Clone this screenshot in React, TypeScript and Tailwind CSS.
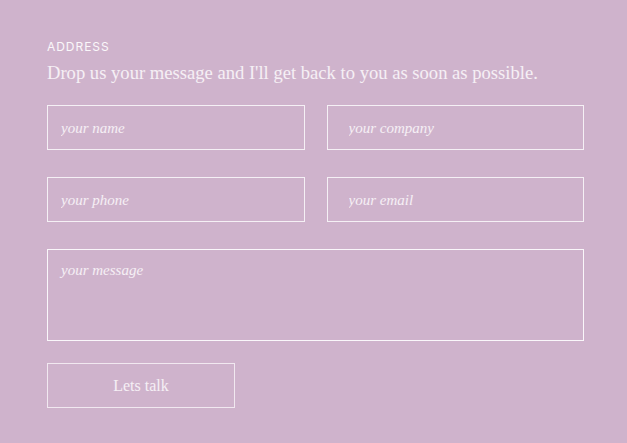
export default function App() {
  const serif = { fontFamily: '"Liberation Serif", "DejaVu Serif", serif' };
  const fields = [
    { p: "your name", pad: "pl-[13px]" },
    { p: "your company", pad: "pl-[21px]" },
    { p: "your phone", pad: "pl-[13px]" },
    { p: "your email", pad: "pl-[21px]" },
  ];
  return (
    <div className="min-h-[443px] w-full bg-[#cfb3cc] pl-[47px] pr-[43px] pt-[40px]">
      <div className="w-[537px]">
        <div
          className="text-[12px] leading-[14px] tracking-[0.08em] text-white/90"
          style={{ fontFamily: 'Inter, "Liberation Sans", sans-serif' }}
        >
          ADDRESS
        </div>
        <h2 className="mt-[6px] text-[18.6px] leading-[26px] text-white/80" style={serif}>
          Drop us your message and I'll get back to you as soon as possible.
        </h2>
        <form className="mt-[19px] flex flex-col" style={serif}>
          <div className="grid grid-cols-2 gap-x-[22px] gap-y-[27px]">
            {fields.map((f) => (
              <input
                key={f.p}
                placeholder={f.p}
                className={`h-[45px] w-full border border-white/80 bg-transparent ${f.pad} pr-[13px] pt-[1px] text-[15px] italic text-white outline-none placeholder:text-white/80`}
              />
            ))}
          </div>
          <textarea
            placeholder="your message"
            className="mt-[27px] h-[92px] w-full resize-none border border-white/90 bg-transparent px-[13px] pt-[9px] text-[15px] italic text-white outline-none placeholder:text-white/80"
          />
          <button
            type="button"
            className="mt-[22px] h-[45px] w-[188px] border border-white/70 bg-transparent pt-[1px] text-[16px] text-white/80"
          >
            Lets talk
          </button>
        </form>
      </div>
    </div>
  );
}
